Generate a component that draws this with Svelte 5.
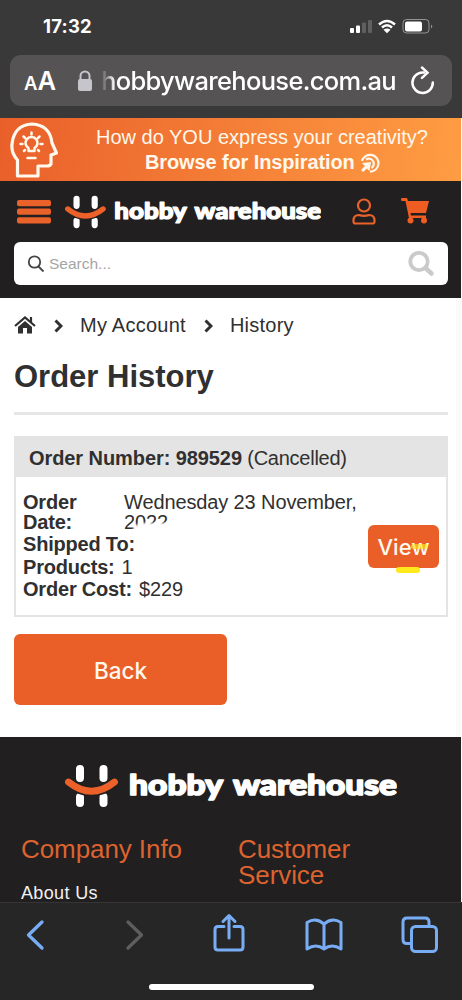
<script>
  const crumbs = ["My Account", "History"]
  const order = {
    number: "989529",
    status: "(Cancelled)",
    date: "Wednesday 23 November, 2022",
    products: 1,
    cost: "$229",
  }
</script>

{#snippet logo(className)}
  <svg class="logo {className}" viewBox="0 0 332 44">
    <g stroke="#fff" stroke-width="8" stroke-linecap="round">
      <path d="M15 5v9M38.500 5v9M15 33v6M38.500 33v6" />
    </g>
    <path d="M3.500 18Q26.500 36.500 49.500 18" fill="none" stroke="#221f20" stroke-width="10" />
    <path d="M3.500 18Q26.500 36.500 49.500 18" fill="none" stroke="#eb6129" stroke-width="6.800" stroke-linecap="round" />
    <text x="64" y="31" textLength="94" lengthAdjust="spacingAndGlyphs">hobby</text>
    <text x="168" y="31" textLength="164" lengthAdjust="spacingAndGlyphs">warehouse</text>
  </svg>
{/snippet}

<div class="screen">
  <header class="browser">
    <div class="status">
      <span class="time">17:32</span>
      <svg class="signals" width="84" height="18" viewBox="0 0 84 18">
        <g fill="#fff">
          <rect x="1" y="10" width="4" height="5" rx="1" />
          <rect x="7" y="7.500" width="4" height="7.500" rx="1" />
          <rect x="13" y="4.500" width="4" height="10.500" rx="1" opacity=".2" />
          <rect x="19" y="2" width="4" height="13" rx="1" opacity=".2" />
          <path d="M34.500 11.800Q38 9.200 41.500 11.800L38 15.200z" />
          <rect x="56" y="3.500" width="17" height="10" rx="2" />
          <path d="M82 6.500q2.500 2 0 4z" opacity=".45" />
        </g>
        <g fill="none" stroke="#fff">
          <path d="M30 6.500Q38 -.5 46 6.500M33 9.500Q38 5 43 9.500" stroke-width="2.500" />
          <rect x="54" y="1.500" width="26" height="13.500" rx="3.500" opacity=".45" />
        </g>
      </svg>
    </div>
    <div class="address">
      <span class="text-size"><small>A</small>A</span>
      <svg class="lock" width="16" height="22" viewBox="0 0 16 22">
        <rect x="1" y="9" width="14" height="12" rx="2" fill="#c7c5cc" />
        <path d="M3.500 10V6a4.500 4.500 0 0 1 9 0v4" fill="none" stroke="#c7c5cc" stroke-width="2" />
      </svg>
      <span class="domain">hobbywarehouse.com.au</span>
      <svg class="reload" width="26" height="30" viewBox="0 0 26 30" fill="none" stroke="#fff" stroke-width="2.500" stroke-linecap="round">
        <path d="M14 6.500H12.500A10.200 10.200 0 1 0 22.800 16.500" />
        <path d="M12 1.500l5.500 5.200-5.500 5.200" />
      </svg>
    </div>
  </header>

  <div class="page">
    <div class="promo">
      <svg class="head" width="48" height="56" viewBox="0 0 48 56" fill="none" stroke="#fff8ec" stroke-width="3.200" stroke-linejoin="round" stroke-linecap="round">
        <path d="M7.500 54V38Q1 31 2 22Q4 3 22 2Q40 3 42 21L46.500 31L41 33V42Q40 44 37 44H28V54Z" />
        <path d="M18.500 29v-3q-3-2-3-5a6 6 0 0 1 12 0q0 3-3 5v3zM17.500 36h8" stroke-width="2.500" />
        <path d="M21.500 10.500v2M13.500 14.500l1.500 1.500M10.500 22h2M29.500 14.500L28 16M32.500 22h-2M14 29l1-1M29 29l-1-1" stroke-width="2.500" />
      </svg>
      <div class="promo-text">
        <span class="question">How do YOU express your creativity?</span>
        <strong>
          <span>Browse for Inspiration</span>
          <svg width="20" height="20" viewBox="0 0 20 20" fill="none" stroke="#fff8ec" stroke-width="2.200">
            <path d="M2 8A8.400 8.400 0 1 1 10 18.600M6 6.500A5 5 0 1 1 11.500 15" />
            <path d="M2 10l9-1-1.500 9-2.500-2.500-4 3.500-2-2 4-4z" fill="#fff8ec" stroke="none" />
          </svg>
        </strong>
      </div>
    </div>

    <div class="masthead">
      <div class="nav">
        <svg class="menu" width="34" height="24" viewBox="0 0 34 24" fill="#e96229">
          <rect y="0" width="34" height="6.200" rx="2" />
          <rect y="8.600" width="34" height="6.200" rx="2" />
          <rect y="17.200" width="34" height="6.200" rx="2" />
        </svg>
        {@render logo("small")}
        <svg class="user" width="24" height="27" viewBox="0 0 24 27" fill="none" stroke="#e96229" stroke-width="2.200">
          <circle cx="12" cy="7.500" r="6" />
          <path d="M1.500 22.500Q1.500 17 7 17Q12 18.800 17 17Q22.500 17 22.500 22.500V23.500Q22.500 25.500 20.500 25.500H3.500Q1.500 25.500 1.500 23.500Z" />
        </svg>
        <svg class="cart" width="30" height="27" viewBox="0 0 30 27" fill="#f05d22">
          <path d="M1.500 1H7L8 4H29L26 16H10.500L11 18.500H26V21H9L5.500 4H1.500Q.5 2.500 1.500 1Z" />
          <circle cx="10.500" cy="23.500" r="3" />
          <circle cx="24" cy="23.500" r="3" />
        </svg>
      </div>
      <div class="search">
        <svg width="18" height="18" viewBox="0 0 18 18" fill="none" stroke="#444" stroke-width="1.800">
          <circle cx="7.500" cy="7" r="5.700" />
          <path d="M11.500 11.500l5 5" />
        </svg>
        <span class="placeholder">Search...</span>
        <svg class="submit" width="28" height="27" viewBox="0 0 28 27" fill="none" stroke="#cacaca">
          <circle cx="12" cy="11.500" r="8.700" stroke-width="3.800" />
          <path d="M18.500 18l6 5.500" stroke-width="4.500" stroke-linecap="round" />
        </svg>
      </div>
    </div>

    <main>
      <nav class="crumbs">
        <svg width="22" height="19" viewBox="0 0 22 19" fill="#303030">
          <path d="M4 11l7-6 7 6v6.500h-5V12H9v5.500H4z" />
          <path d="M1 10L11 1.500 21 10M17 1v6" fill="none" stroke="#303030" stroke-width="2.200" />
        </svg>
        {#each crumbs as crumb}
          <svg class="chevron" width="9" height="14" viewBox="0 0 9 14">
            <path d="M1.500 1.500L7 7l-5.500 5.500" fill="none" stroke="#303030" stroke-width="3" />
          </svg>
          <span>{crumb}</span>
        {/each}
      </nav>
      <h1>Order History</h1>

      <section class="order">
        <h2><b>Order Number: {order.number}</b> {order.status}</h2>
        <div class="order-body">
          <dl>
            <div class="date">
              <dt>Order Date:</dt>
              <dd>{order.date}</dd>
            </div>
            <div><dt>Shipped To:</dt></div>
            <div><dt>Products:</dt><dd>{order.products}</dd></div>
            <div><dt>Order Cost:</dt><dd>{order.cost}</dd></div>
          </dl>
          <button class="view">View</button>
        </div>
      </section>
      <button class="back">Back</button>
    </main>

    <footer>
      {@render logo("large")}
      <div class="columns">
        <div>
          <h3>Company Info</h3>
          <span class="about">About Us</span>
        </div>
        <h3>Customer Service</h3>
      </div>
    </footer>
  </div>

  <div class="toolbar">
    <div class="tools">
      <svg width="20" height="32" viewBox="0 0 20 32"><path d="M17 3L3.500 16 17 29" stroke-width="3.300" /></svg>
      <svg class="disabled" width="20" height="32" viewBox="0 0 20 32"><path d="M3 3l13.500 13L3 29" stroke-width="3.300" /></svg>
      <svg class="share" width="32" height="40" viewBox="0 0 32 40"><path d="M11 13.500H5Q2 13.500 2 16.500V34Q2 37 5 37H27Q30 37 30 34V16.500Q30 13.500 27 13.500H21M16 25V3M10 8.500L16 2.500 22 8.500" /></svg>
      <svg class="bookmarks" width="38" height="34" viewBox="0 0 38 34"><path d="M19 6Q11-1 2 4.500V31Q11 25 19 31Q27 25 36 31V4.500Q27-1 19 6ZM19 6V31" /></svg>
      <svg class="tabs" width="38" height="38" viewBox="0 0 38 38"><path d="M9.500 27.500H6Q2 27.500 2 23.500V6Q2 2 6 2H24Q28 2 28 6V10" /><rect x="10.500" y="10.500" width="25" height="25" rx="4" /></svg>
    </div>
    <div class="home-bar"></div>
  </div>
</div>

<style>
  :global(body) {
    margin: 0;
  }
  .screen {
    display: flex;
    flex-direction: column;
    width: 462px;
    height: 1000px;
    overflow: hidden;
    background: #fff;
    color: #303030;
    font-family: "Liberation Sans", Arial, sans-serif;
  }
  .screen * {
    box-sizing: border-box;
  }
  svg {
    display: block;
    flex: none;
  }
  button {
    border: 0;
    padding: 0;
    background: #ea5f27;
    color: #fff8ef;
    font-family: Inter, sans-serif;
    font-weight: 500;
  }

  /* Browser chrome */
  .browser {
    flex: none;
    height: 118px;
    background: #393939;
    color: #fff;
    font-family: Inter, sans-serif;
  }
  .status {
    display: flex;
    justify-content: space-between;
    height: 55px;
    padding: 17px 29px 0 43px;
  }
  .signals {
    margin-top: 1px;
  }
  .time {
    font-size: 18.5px;
    font-weight: 700;
    line-height: 18px;
    letter-spacing: 0.2px;
  }
  .address {
    display: flex;
    align-items: center;
    width: 442px;
    height: 51px;
    margin-left: 10px;
    border-radius: 11px;
    background: #555354;
  }
  .text-size {
    width: 52px;
    padding-left: 14px;
    font-size: 25.5px;
    font-weight: 600;
    white-space: nowrap;
  }
  .text-size small {
    font-size: 18.5px;
  }
  .lock {
    margin-left: 15px;
  }
  .domain {
    width: 296px;
    margin-left: 8px;
    font-size: 25.5px;
    font-weight: 500;
    letter-spacing: -0.68px;
    white-space: nowrap;
    mask-image: linear-gradient(90deg, transparent, #000 14px);
  }
  .reload {
    margin-left: 13px;
  }

  /* Shop header */
  .page {
    flex: none;
    width: 461px;
    height: 784px;
    overflow: hidden;
  }
  .promo {
    display: flex;
    height: 63px;
    padding: 4px 0 0 10px;
    background: linear-gradient(100deg, #e95f2a, #ff9d43);
    color: #fff8ec;
  }
  .promo-text {
    display: flex;
    flex-direction: column;
    width: 332px;
    margin-left: 38px;
    font-size: 20px;
    line-height: 25px;
    white-space: nowrap;
  }
  .question {
    margin-top: 3px;
  }
  .promo strong {
    display: flex;
    gap: 5px;
    align-items: center;
    margin-left: 49px;
    letter-spacing: -0.12px;
  }
  .masthead {
    height: 117px;
    background: #221f20;
  }
  .nav {
    display: flex;
    height: 61px;
    padding: 14px 0 0 17px;
  }
  .menu {
    margin-top: 5px;
  }
  .logo text {
    fill: #fff;
    stroke: #fff;
    stroke-width: 1.6px;
    stroke-linejoin: round;
    font-family: Lato, sans-serif;
    font-size: 28.5px;
    font-weight: 900;
  }
  .small {
    width: 256px;
    height: 34px;
    margin-left: 14px;
  }
  .user {
    margin: 3px 0 0 31px;
  }
  .cart {
    margin: 2px 0 0 24px;
  }
  .search {
    display: flex;
    align-items: center;
    width: 434px;
    height: 43px;
    margin-left: 14px;
    padding: 0 13px;
    border-radius: 6px;
    background: #fff;
  }
  .placeholder {
    margin: 1px 0 0 4px;
    color: #a5a5a5;
    font-size: 15.5px;
  }
  .submit {
    margin-left: auto;
  }

  /* Order history */
  main {
    height: 439px;
    padding: 0 8px 0 14px;
    border-right: 5px solid #fafafa;
  }
  .crumbs {
    display: flex;
    align-items: center;
    padding-top: 15px;
    font-size: 20px;
    line-height: 25px;
    letter-spacing: 0.25px;
  }
  .chevron {
    margin: 0 17px 0 18px;
  }
  h1 {
    height: 77px;
    margin: 0;
    padding-top: 21px;
    border-bottom: 3px solid #e6e6e6;
    font-size: 31px;
    line-height: 36px;
  }
  .order {
    height: 181px;
    margin-top: 21px;
    border: 2px solid #e4e4e4;
    border-top: 0;
  }
  h2 {
    height: 41px;
    margin: 0;
    padding-left: 13px;
    background: #e4e4e4;
    font-size: 20px;
    font-weight: 400;
    line-height: 44px;
    letter-spacing: -0.25px;
  }
  h2 b {
    letter-spacing: -0.08px;
  }
  .order-body {
    display: flex;
    padding: 15px 7px 0;
    font-size: 20px;
    letter-spacing: -0.12px;
  }
  dl {
    flex: 1;
    margin: 0;
  }
  dl div {
    display: flex;
    gap: 7px;
    line-height: 22.5px;
  }
  dl .date {
    position: relative;
    gap: 0;
    height: 41px;
    line-height: 20px;
  }
  dt {
    font-weight: 700;
    letter-spacing: -0.2px;
  }
  dd {
    margin: 0;
  }
  .date dt {
    width: 101px;
    padding-right: 30px;
  }
  .date dd {
    width: 240px;
  }
  /* Scribbled-out address */
  .date::after {
    content: "";
    position: absolute;
    left: 109px;
    top: 31px;
    width: 90px;
    height: 16px;
    background: #fff;
    border-radius: 14px 0 0 8px;
    filter: blur(1px);
  }
  .view {
    position: relative;
    width: 71px;
    height: 43px;
    margin-top: 33px;
    border-radius: 6px;
    font-size: 22px;
    letter-spacing: 0;
  }
  /* Highlighter marks */
  .view::before,
  .view::after {
    content: "";
    position: absolute;
    border-radius: 3px;
    background: #ffe91a;
    filter: blur(0.7px);
  }
  .view::before {
    left: 43px;
    top: 19px;
    width: 17px;
    height: 5px;
    opacity: 0.65;
  }
  .view::after {
    left: 28px;
    bottom: -5px;
    width: 24px;
    height: 6px;
  }
  .back {
    width: 213px;
    height: 71px;
    margin-top: 17px;
    padding-top: 2px;
    border-radius: 6px;
    font-size: 22.5px;
  }

  /* Footer */
  footer {
    height: 165px;
    padding: 27px 21px 0;
    background: #221f20;
  }
  .large {
    width: 332px;
    height: 44px;
    margin-left: 44px;
  }
  .columns {
    display: grid;
    grid-template-columns: 217px 160px;
    margin-top: 29px;
  }
  h3 {
    margin: 0;
    color: #dc632f;
    font-size: 26px;
    font-weight: 400;
    line-height: 25.5px;
    letter-spacing: -0.08px;
  }
  .about {
    display: block;
    margin-top: 18px;
    color: #f2f2f2;
    font-size: 18px;
    line-height: 24px;
    letter-spacing: 0.35px;
  }

  /* Bottom toolbar */
  .toolbar {
    flex: none;
    height: 98px;
    border-top: 1px solid #363435;
    background: #262626;
  }
  .tools {
    display: flex;
    align-items: center;
    height: 64px;
    padding-left: 25px;
  }
  .tools svg {
    fill: none;
    stroke: #78adf5;
    stroke-width: 3px;
    stroke-linecap: round;
    stroke-linejoin: round;
  }
  .tools .disabled {
    margin-left: 80px;
    stroke: #5e5e5e;
  }
  .share {
    margin: -4px 0 0 68px;
  }
  .bookmarks {
    margin-left: 60px;
  }
  .tabs {
    margin-left: 58px;
  }
  .home-bar {
    width: 165px;
    height: 6px;
    margin: 17px 0 0 149px;
    border-radius: 3px;
    background: #fff;
  }
</style>
